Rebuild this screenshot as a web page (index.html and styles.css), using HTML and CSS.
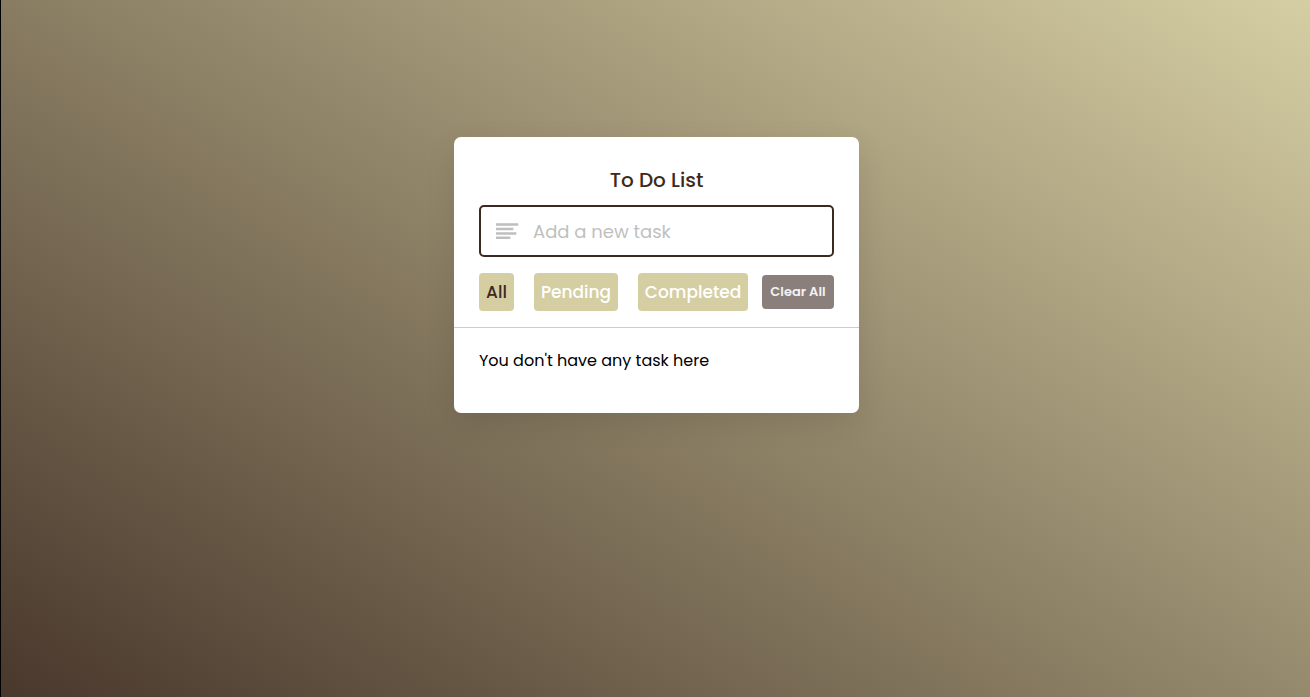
FILE: index.html
```html
<!DOCTYPE html>
<html lang="en">
<head>
<meta charset="utf-8">
<meta name="viewport" content="width=device-width, initial-scale=1">
<title>To Do List</title>
<link rel="stylesheet" href="styles.css">
</head>
<body>
<main class="card">
  <h1 class="title">To Do List</h1>
  <label class="task-input">
    <svg class="task-icon" viewBox="0 0 23 16" aria-hidden="true">
      <path d="M0 1.5H22.3M0 6H17.3M0 10.5H20.3M0 14.8H14.3"/>
    </svg>
    <input class="task-field" type="text" placeholder="Add a new task" aria-label="Add a new task">
  </label>
  <div class="controls">
    <div class="filters">
      <button class="filter filter-all active" type="button">All</button>
      <button class="filter filter-pending" type="button">Pending</button>
      <button class="filter filter-completed" type="button">Completed</button>
    </div>
    <button class="clear" type="button">Clear All</button>
  </div>
  <p class="empty">You don't have any task here</p>
</main>
</body>
</html>
```
FILE: styles.css
```css
* {
  box-sizing: border-box;
  margin: 0;
  padding: 0;
  font-family: Poppins, Inter, sans-serif;
}

body {
  min-height: 100vh;
  padding: 137px 0 24px 2px;
  border-left: 1px solid #000;
  background: linear-gradient(to top right, #3c2a21, #d5cea3) 0 0 / 100% 120vh no-repeat;
}

.card {
  max-width: 405px;
  margin: 0 auto;
  padding: 28px 0 40px;
  border-radius: 7px;
  background: #fff;
  box-shadow: 0 10px 30px rgba(0, 0, 0, 0.1);
}

.title {
  color: #3c2a21;
  font-size: 20px;
  font-weight: 500;
  line-height: 30px;
  text-align: center;
}

.task-input {
  display: flex;
  align-items: center;
  gap: 14px;
  height: 52px;
  margin: 10px 25px 0;
  padding: 0 15px;
  border: 2px solid #3c2a21;
  border-radius: 5px;
}

.task-icon {
  flex: none;
  width: 23px;
  height: 16px;
  fill: none;
  stroke: #bfbfbf;
  stroke-width: 2.4;
}

.task-field {
  flex: 1;
  min-width: 0;
  border: 0;
  outline: 0;
  background: none;
  font-size: 18px;
}

.task-field::placeholder {
  color: #bfbfbf;
}

.controls {
  display: flex;
  align-items: center;
  justify-content: space-between;
  padding: 16px 25px;
  border-bottom: 1px solid #ccc;
}

.filters {
  display: flex;
  gap: 20px;
}

.filter,
.clear {
  border: 0;
  border-radius: 4px;
  color: #fff;
  font-weight: 500;
  text-align: center;
  cursor: pointer;
}

.filter {
  height: 38px;
  background: #d5cea3;
  font-size: 17px;
}

.filter.active {
  color: #3c2a21;
}

.filter-all {
  width: 35px;
}

.filter-pending {
  width: 84px;
}

.filter-completed {
  width: 110px;
}

.clear {
  width: 72px;
  height: 34px;
  background: #8a7f7a;
  color: #f3f2f2;
  font-size: 13px;
  font-weight: 600;
}

.empty {
  padding: 20px 25px 0;
  color: #000;
  font-size: 16px;
  line-height: 25px;
}
```
